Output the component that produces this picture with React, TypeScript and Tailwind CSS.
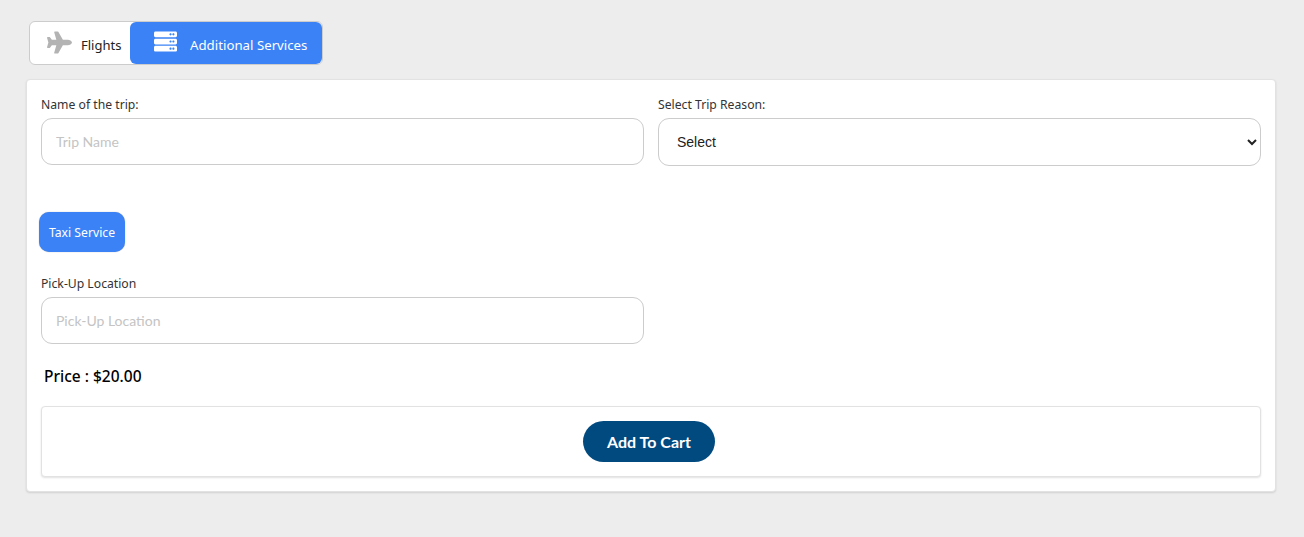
import React from "react";
import { FaPlane, FaServer } from "react-icons/fa";

const label = "block text-[12.2px] leading-[18px] text-[#333] font-['Noto_Sans',sans-serif]";
const input =
  "block w-full h-[47px] rounded-[11px] border border-[#ccc] bg-white px-[14px] text-[14px] font-['Lato',sans-serif] text-[#333] placeholder:text-[#c4c4c4] outline-none";

export default function App() {
  return (
    <div className="min-h-[537px] bg-[#ededed] pt-[21px] pl-[26px] pr-[28px] font-['Noto_Sans',sans-serif]">
      <div className="ml-[3px] flex h-[44px] w-[294px] rounded-[6px] border border-[#ccc] bg-white">
        <div className="flex w-[100px] items-center pl-[17px]">
          <div className="-mt-[2px] shrink-0">
            <FaPlane size={25} color="#b3b3b3" />
          </div>
          <span className="ml-[9px] mt-[5px] text-[13px] text-[#222]">Flights</span>
        </div>
        <div className="flex flex-1 items-center rounded-[6px] bg-[#3b82f6] pl-[24px]">
          <div className="-mt-[3px] shrink-0">
            <FaServer size={23} color="#ffffff" />
          </div>
          <span className="ml-[13px] mt-[5px] text-[13.25px] text-white">Additional Services</span>
        </div>
      </div>

      <div className="mt-[14px] h-[413px] rounded-[4px] border border-[#e2e2e2] bg-white px-[14px] pt-[16px] shadow-[0_1px_2px_rgba(0,0,0,0.12)]">
        <div className="flex gap-[14px]">
          <div className="flex-1">
            <label className={label}>Name of the trip:</label>
            <input className={`${input} mt-[4px]`} placeholder="Trip Name" />
          </div>
          <div className="flex-1">
            <label className={label}>Select Trip Reason:</label>
            <select className="mt-[4px] block h-[48px] w-full rounded-[11px] border border-[#ccc] bg-white pl-[14px] pr-[4px] font-['Liberation_Sans',sans-serif] text-[14px] text-[#222] outline-none">
              <option>Select</option>
            </select>
          </div>
        </div>

        <div className="mt-[46px] -ml-[2px] flex h-[40px] w-[86px] items-center justify-center rounded-[10px] bg-[#3b82f6] pt-[2px] text-[12.2px] text-white shadow-[0_0_1px_rgba(0,0,0,0.4)]">
          Taxi Service
        </div>

        <div className="mt-[23px] w-[603px]">
          <label className={label}>Pick-Up Location</label>
          <input className={`${input} mt-[4px]`} placeholder="Pick-Up Location" />
        </div>

        <div className="mt-[21px] ml-[3px] text-[15.5px] leading-[22px] font-medium text-black">Price : $20.00</div>

        <div className="mt-[19px] flex h-[71px] items-center justify-center rounded-[4px] border border-[#e2e2e2] bg-white pr-[4px] shadow-[0_1px_2px_rgba(0,0,0,0.12)]">
          <button className="h-[41px] w-[132px] rounded-full bg-[#004a80] pt-[1px] font-['Lato',sans-serif] text-[16px] font-bold text-white">
            Add To Cart
          </button>
        </div>
      </div>
    </div>
  );
}
